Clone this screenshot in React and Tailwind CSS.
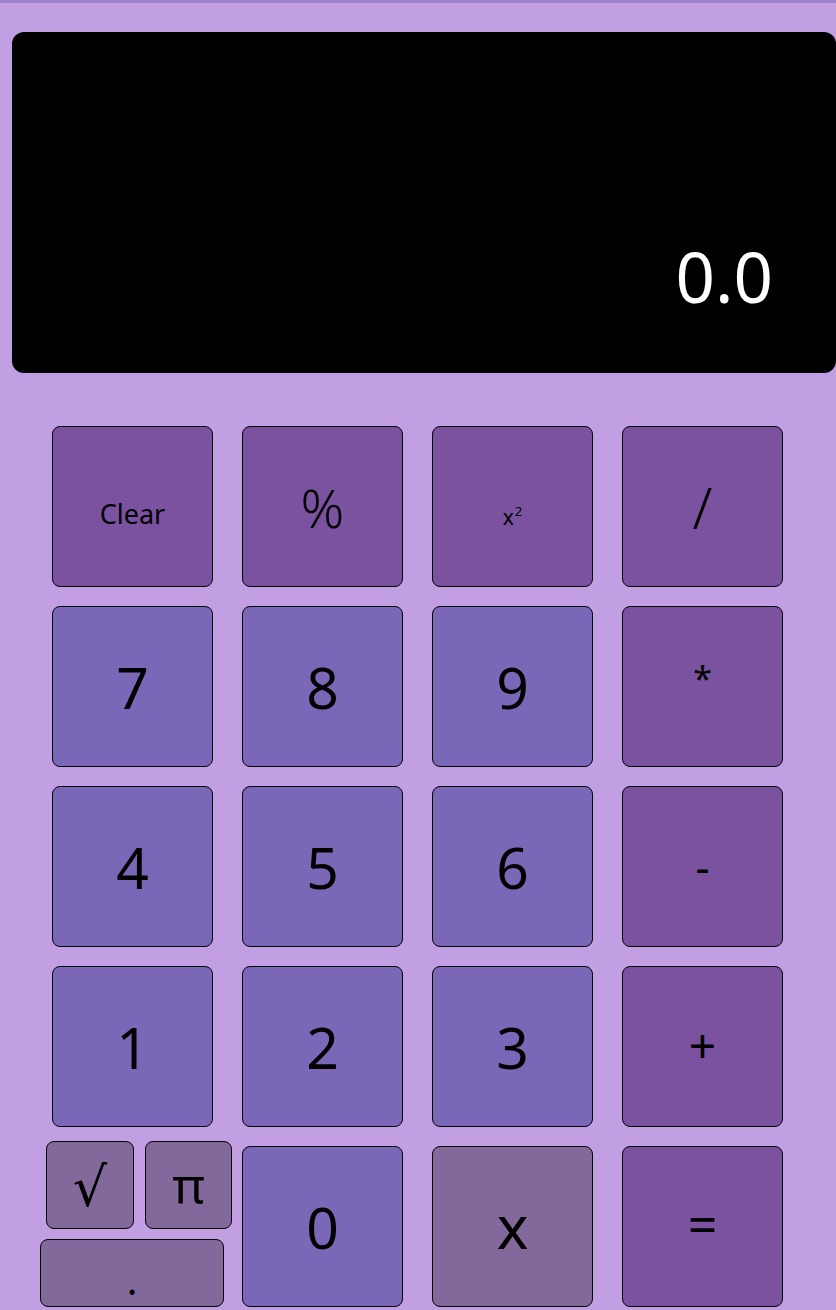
import React from 'react';

const OP = 'bg-[#7a52a0]';
const NUM = 'bg-[#7a67b7]';
const GREY = 'bg-[#83699b]';

function Key({ label, tone, small }) {
  return (
    <button
      className={`w-[161px] h-[161px] shrink-0 ${tone} border border-black rounded-[8px] text-black text-[57px] leading-[152px] text-center`}
    >
      {small ? <span className={small}>{label}</span> : label}
    </button>
  );
}

function Small({ children, className }) {
  return (
    <button className={`${GREY} border border-black rounded-[8px] text-black shrink-0 ${className}`}>
      {children}
    </button>
  );
}

export default function App() {
  const rows = [
    [
      { label: 'Clear', tone: OP, small: 'text-[27px] relative -top-[1px]' },
      { label: '%', tone: OP, small: 'text-[54px] font-light' },
      {
        label: (
          <>
            x<span className="text-[13px] relative -top-[9px] ml-[1px]">2</span>
          </>
        ),
        tone: OP,
        small: 'text-[21px]',
      },
      { label: '/', tone: OP, small: 'font-light' },
    ],
    [
      { label: '7', tone: NUM },
      { label: '8', tone: NUM },
      { label: '9', tone: NUM },
      { label: '*', tone: OP, small: 'text-[34px] relative -top-[14px]' },
    ],
    [
      { label: '4', tone: NUM },
      { label: '5', tone: NUM },
      { label: '6', tone: NUM },
      { label: '-', tone: OP, small: 'text-[44px] relative -top-[3px]' },
    ],
    [
      { label: '1', tone: NUM },
      { label: '2', tone: NUM },
      { label: '3', tone: NUM },
      { label: '+', tone: OP, small: 'text-[48px] relative -top-[4px]' },
    ],
  ];

  return (
    <div
      className="min-h-[1310px] w-[836px] overflow-hidden bg-[#c29fe2] border-t-[3px] border-[#9b80cc]"
      style={{ fontFamily: '"Noto Sans", "DejaVu Sans", sans-serif' }}
    >
      {/* display */}
      <div className="ml-[12px] mt-[29px] w-[824px] h-[341px] bg-black rounded-[12px] flex items-end justify-end pr-[63px] pb-[62px]">
        <span className="text-white text-[69px] leading-none">0.0</span>
      </div>

      {/* keypad */}
      <div className="mt-[53px] ml-[52px] flex flex-col gap-[19px]">
        {rows.map((row, i) => (
          <div key={i} className="flex gap-[29px]">
            {row.map((k, j) => (
              <Key key={j} {...k} />
            ))}
          </div>
        ))}

        {/* last row */}
        <div className="flex gap-[29px] items-start">
          <div className="w-[161px] shrink-0">
            <div className="-ml-[12px] -mt-[5px] w-[184px] flex flex-col gap-[10px]">
              <div className="flex gap-[11px] pl-[6px]">
                <Small className="w-[88px] h-[88px] text-[54px] leading-[84px]">√</Small>
                <Small className="w-[87px] h-[88px] text-[50px] leading-[78px]">π</Small>
              </div>
              <Small className="w-[184px] h-[68px] text-[40px] leading-[80px]">.</Small>
            </div>
          </div>
          <Key label="0" tone={NUM} />
          <Key label="x" tone={GREY} small="text-[60px]" />
          <Key label="=" tone={OP} small="text-[52px] relative -top-[4px]" />
        </div>
      </div>
    </div>
  );
}
